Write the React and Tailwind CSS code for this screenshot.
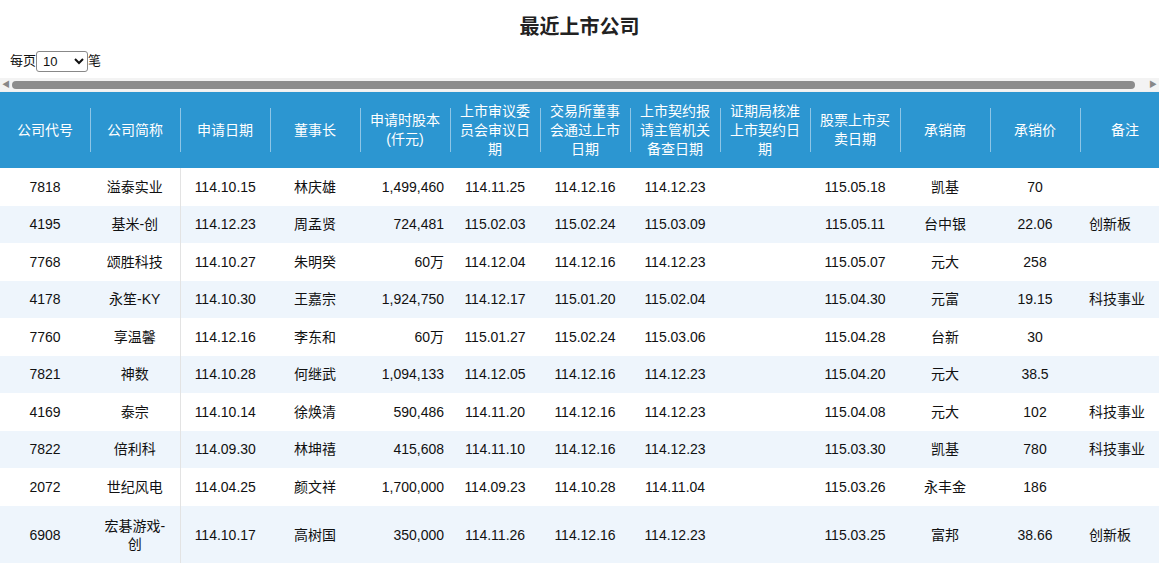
import React from "react";

const heads = [
  "公司代号", "公司简称", "申请日期", "董事长", "申请时股本\n(仟元)", "上市审议委\n员会审议日\n期",
  "交易所董事\n会通过上市\n日期", "上市契约报\n请主管机关\n备查日期", "证期局核准\n上市契约日\n期", "股票上市买\n卖日期", "承销商", "承销价", "备注",
];

const rows = [
  ["7818", "溢泰实业", "114.10.15", "林庆雄", "1,499,460", "114.11.25", "114.12.16", "114.12.23", "", "115.05.18", "凯基", "70", ""],
  ["4195", "基米-创", "114.12.23", "周孟贤", "724,481", "115.02.03", "115.02.24", "115.03.09", "", "115.05.11", "台中银", "22.06", "创新板"],
  ["7768", "颂胜科技", "114.10.27", "朱明癸", "60万", "114.12.04", "114.12.16", "114.12.23", "", "115.05.07", "元大", "258", ""],
  ["4178", "永笙-KY", "114.10.30", "王嘉宗", "1,924,750", "114.12.17", "115.01.20", "115.02.04", "", "115.04.30", "元富", "19.15", "科技事业"],
  ["7760", "享温馨", "114.12.16", "李东和", "60万", "115.01.27", "115.02.24", "115.03.06", "", "115.04.28", "台新", "30", ""],
  ["7821", "神数", "114.10.28", "何继武", "1,094,133", "114.12.05", "114.12.16", "114.12.23", "", "115.04.20", "元大", "38.5", ""],
  ["4169", "泰宗", "114.10.14", "徐焕清", "590,486", "114.11.20", "114.12.16", "114.12.23", "", "115.04.08", "元大", "102", "科技事业"],
  ["7822", "倍利科", "114.09.30", "林坤禧", "415,608", "114.11.10", "114.12.16", "114.12.23", "", "115.03.30", "凯基", "780", "科技事业"],
  ["2072", "世纪风电", "114.04.25", "颜文祥", "1,700,000", "114.09.23", "114.10.28", "114.11.04", "", "115.03.26", "永丰金", "186", ""],
  ["6908", "宏碁游戏-\n创", "114.10.17", "高树国", "350,000", "114.11.26", "114.12.16", "114.12.23", "", "115.03.25", "富邦", "38.66", "创新板"],
];

export default function App() {
  return (
    <div className="w-[1159px] h-[563px] overflow-hidden bg-white text-[14px] text-[#111]" style={{ fontFamily: '"Liberation Sans", "Noto Sans CJK SC", sans-serif' }}>
      <h1 className="text-center text-[20px] font-bold pt-[12px] h-[46px] text-[#222]">最近上市公司</h1>
      <div className="flex items-center pl-[10px] h-[30px] text-[13px]">
        每页
        <select className="border border-[#888] rounded-[3px] w-[52px] h-[21px] text-[13px] px-[2px]" defaultValue="10">
          <option>10</option>
        </select>
        笔
      </div>
      <div className="flex items-center h-[14px] mt-[2px] bg-[#f3f3f3]">
        <span className="text-[#888] text-[8px] px-[2px]">◀</span>
        <div className="flex-1 h-[8px] rounded-full bg-[#8c8c8c] mr-[12px]" />
        <span className="text-[#888] text-[8px] px-[2px]">▶</span>
      </div>
      <table className="table-fixed border-collapse w-[1170px]">
        <colgroup>
          {heads.map((_, i) => <col key={i} className="w-[90px]" />)}
        </colgroup>
        <thead>
          <tr className="bg-[#2c96d1] text-white h-[76px] shadow-[0_2px_3px_rgba(0,0,0,0.25)]">
            {heads.map((h, i) => (
              <th key={i} className="font-normal text-[14px] leading-[19px] px-[2px] relative whitespace-pre-line">
                {h}
                {i > 0 && <span className="absolute left-0 top-[16px] bottom-[16px] w-px bg-[#8ec5e6]" />}
              </th>
            ))}
          </tr>
        </thead>
        <tbody>
          {rows.map((r, ri) => (
            <tr key={ri} className={`${ri % 2 ? "bg-[#eef5fc]" : "bg-white"} ${ri === 9 ? "h-[58px]" : "h-[37.5px]"}`}>
              {r.map((c, ci) => (
                <td key={ci} className={`whitespace-pre-line leading-[18px] ${ci === 4 ? "text-right pr-[6px]" : ci === 12 ? "text-left pl-[9px]" : "text-center"} ${ci === 1 ? "border-r border-[#e3e3e3]" : ""}`}>
                  {c}
                </td>
              ))}
            </tr>
          ))}
        </tbody>
      </table>
    </div>
  );
}
